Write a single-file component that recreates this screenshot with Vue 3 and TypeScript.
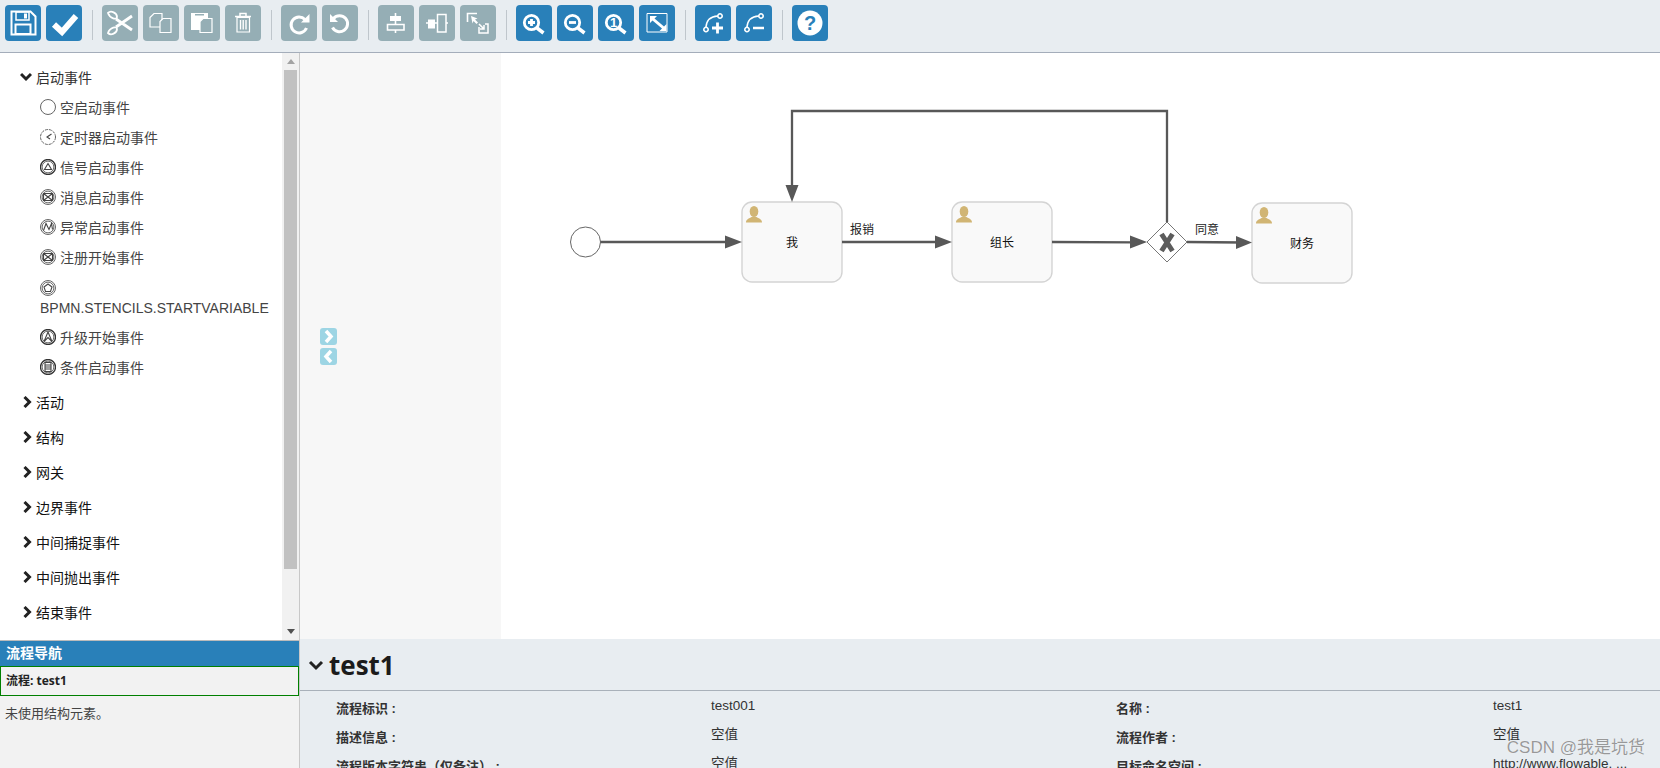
<template>
  <div class="editor">
    <header class="toolbar">
      <template v-for="(group, g) in toolbar" :key="g">
        <i v-if="g > 0" class="tool-sep"></i>
        <button
          v-for="btn in group"
          :key="btn.name"
          class="tool-btn"
          :class="{ disabled: btn.disabled }"
          :title="btn.name"
        >
          <svg viewBox="0 0 36 36" width="36" height="36">
            <path
              v-for="(p, i) in icons[btn.name]"
              :key="i"
              :d="p.d"
              :fill="p.fill ?? 'none'"
              :stroke="p.stroke ?? (p.fill ? 'none' : '#fff')"
              :stroke-width="p.w ?? 1.6"
            />
            <text v-if="btn.glyph" :x="btn.glyphX" :y="btn.glyphY" :font-size="btn.glyphSize" :fill="btn.glyphFill" class="tool-glyph">{{ btn.glyph }}</text>
          </svg>
        </button>
      </template>
    </header>

    <div class="workspace">
      <aside class="left-col">
        <div class="palette">
          <div class="palette-list">
            <div class="group-open">
              <svg class="chev" width="12" height="12" viewBox="0 0 12 12"><path d="M1 3l5 5 5-5" /></svg>
              启动事件
            </div>
            <div v-for="item in startEvents" :key="item.name" class="item" :class="{ tall: item.tall }">
              <svg width="16" height="16" viewBox="0 0 16 16" class="item-icon">
                <circle cx="8" cy="8" r="7.500" fill="#fff" :stroke="item.dark ? '#333' : '#666'" :stroke-width="item.dark ? 1.3 : 1" :stroke-dasharray="item.dashed ? '3 1' : undefined" />
                <circle v-if="item.inner" cx="8" cy="8" r="5.900" fill="none" stroke="#666" stroke-width="1" />
                <path v-if="item.d" :d="item.d" fill="none" stroke="#444" stroke-width="1.100" />
              </svg>
              <span>{{ item.name }}</span>
            </div>
            <div class="closed-groups">
              <div v-for="name in closedGroups" :key="name" class="group">
                <svg class="chev" width="12" height="12" viewBox="0 0 12 12"><path d="M3.500 1l5 5-5 5" /></svg>
                {{ name }}
              </div>
            </div>
          </div>
          <div class="scrollbar">
            <span class="sb-up"></span>
            <span class="sb-thumb"></span>
            <span class="sb-rest"></span>
            <span class="sb-down"></span>
          </div>
        </div>
        <div class="navigator">
          <div class="nav-title">流程导航</div>
          <div class="nav-current">流程: test1</div>
          <p class="nav-empty">未使用结构元素。</p>
        </div>
      </aside>

      <main class="right-col">
        <section class="canvas">
          <div class="canvas-side">
            <span class="side-btn"><svg width="17" height="17" viewBox="0 0 17 17"><path d="M6 3l5 5.500-5 5.500" /></svg></span>
            <span class="side-btn"><svg width="17" height="17" viewBox="0 0 17 17"><path d="M11 3l-5 5.500 5 5.500" /></svg></span>
          </div>
          <svg class="diagram" viewBox="501 53 1159 586" width="1159" height="586">
            <circle cx="585.500" cy="242" r="15" fill="#fff" stroke="#666" stroke-width="1" />

            <g v-for="t in tasks" :key="t.name">
              <rect :x="t.x" :y="t.y" width="100" height="80" rx="10" fill="#f9f9f9" stroke="#d4d4d4" stroke-width="1.400" />
              <ellipse :cx="t.x + 12" :cy="t.y + 9.500" rx="4.300" ry="5.500" fill="#d1b574" />
              <path :d="`M${t.x + 4} ${t.y + 20.500}c0-3 2-3.500 5.500-5.500h5c3.500 2 5.500 2.500 5.500 5.500z`" fill="#d1b574" />
              <text :x="t.x + 50" :y="t.y + 45" class="task-name">{{ t.name }}</text>
            </g>

            <path v-for="(f, i) in flows" :key="i" :d="f" fill="none" stroke="#585858" stroke-width="2.300" />
            <path d="M742 242l-17-6.500v13zM952 242l-17-6.500v13zM1147 242l-17-6.500v13zM1252 242.500l-16-6.500v13zM792 202l-6.500-17h13z" fill="#585858" />

            <path d="M1167 222l20 20-20 20-20-20z" fill="#fff" stroke="#777" stroke-width="1" />
            <path d="M1161.500 234l11 17M1172.500 234l-11 17" stroke="#5c5c5c" stroke-width="5" fill="none" />

            <text x="850" y="234" class="flow-label">报销</text>
            <text x="1195" y="234" class="flow-label">同意</text>
          </svg>
        </section>

        <section class="props">
          <div class="props-head">
            <svg class="chev head-chev" width="16" height="16" viewBox="0 0 16 16"><path d="M2 5l6 6 6-6" /></svg>
            <h1>test1</h1>
          </div>
          <div class="props-grid">
            <template v-for="row in properties" :key="row.label">
              <div class="prop-label">{{ row.label }}</div>
              <div class="prop-value">{{ row.value }}</div>
            </template>
          </div>
        </section>
      </main>
    </div>

    <div class="watermark">CSDN @我是坑货</div>
  </div>
</template>

<script setup lang="ts">
type Shape = { d: string; fill?: string; stroke?: string; w?: number }
type ToolBtn = {
  name: string
  disabled?: boolean
  glyph?: string
  glyphX?: number
  glyphY?: number
  glyphSize?: number
  glyphFill?: string
}

const circle = (x: number, y: number, r: number) =>
  `M${x - r} ${y}a${r} ${r} 0 1 0 ${2 * r} 0a${r} ${r} 0 1 0 ${-2 * r} 0z`

const grey = '#95aeb5'

const lens: Shape[] = [
  { d: circle(15.5, 17.5, 7.2), w: 2.800 },
  { d: 'M21 23l6.500 5', w: 3.500 }
]

const icons: Record<string, Shape[]> = {
  save: [
    { d: 'M6.500 6.500h19l5 5v18h-24z', w: 2 },
    { d: 'M11 7h13v8H11z', w: 1.500 },
    { d: 'M19 8.500h3v5h-3z', fill: '#fff' },
    { d: 'M10.500 19.500h15v9.500h-15z', w: 2 }
  ],
  check: [{ d: 'M8 19.500l8 7.500L30 11', w: 6 }],
  cut: [
    { d: 'M6 8c3-3 9 0 9 4 0 3-7 2-9-4z', w: 1.800 },
    { d: 'M6 28c3 3 9 0 9-4 0-3-7-2-9 4z', w: 1.800 },
    { d: 'M14 14l16 11M14 22l16-11', w: 2.800 }
  ],
  copy: [
    { d: 'M7 12.500l4-4h8v13.500H7z', w: 1.200 },
    { d: 'M17 16.500l3-3h8v14H17z', w: 1.200, fill: grey, stroke: '#fff' }
  ],
  paste: [
    { d: 'M7 8h17v17H7z', fill: '#fff' },
    { d: 'M11 9h9v1.500h-9z', fill: grey },
    { d: 'M16 16.500l3-3h9v14H16z', w: 1.200, fill: grey, stroke: '#fff' }
  ],
  trash: [
    { d: 'M10 11.500h16M15 11V8.500h6V11', w: 1.500 },
    { d: 'M12 12.500h12.500V27H12z', w: 1.200 },
    { d: 'M15.500 15v9.500M18.200 15v9.500M21 15v9.500', w: 1.400 }
  ],
  redo: [
    { d: 'M24 14.500a8 8 0 1 0 1.500 8.500', w: 3 },
    { d: 'M20 17.500h8.500V9z', fill: '#fff' }
  ],
  undo: [
    { d: 'M11.500 13.500a8 8 0 1 1-1 9', w: 3 },
    { d: 'M16 17H8V9z', fill: '#fff' }
  ],
  alignV: [
    { d: 'M17.500 8v3M17.500 16v3M17.500 25v3', w: 1.600 },
    { d: 'M12 11h11v5H12z', fill: '#fff' },
    { d: 'M9.500 19.500H26V25H9.500z', w: 1.600 }
  ],
  alignH: [
    { d: 'M7 18h2M16 18h2.500M27 18h2', w: 1.600 },
    { d: 'M9 14.500h7v9H9z', fill: '#fff' },
    { d: 'M18.500 9.500H27V27h-8.500z', w: 1.500 }
  ],
  sameSize: [
    { d: 'M7.500 17V8.500H17', w: 1.600 },
    { d: 'M11 11l6.500 2.500-2.500 1 3 3-1.500 1.500-3-3-1 2.500z', fill: '#fff' },
    { d: 'M19 22v6h9v-9h-3', w: 1.500 },
    { d: 'M19 19l5 5M24 20v4h-4', w: 1.500 }
  ],
  zoomIn: [...lens, { d: 'M12 17.500h7M15.500 14v7', w: 2.800 }],
  zoomOut: [...lens, { d: 'M12 17.500h7', w: 2.800 }],
  zoomOne: [...lens],
  fit: [
    { d: 'M8 8.500h20V27H8z', w: 1 },
    { d: 'M11 11h7l-2.500 2.500 9.500 8 2.500-2.500v7h-7l2.500-2.500-9.500-8L11 18z', fill: '#fff' }
  ],
  bendAdd: [
    { d: circle(11, 24.500, 2.200), w: 1.600 },
    { d: circle(25, 11, 2.200), w: 1.600 },
    { d: 'M11 22c.5-7 4-10.500 11.800-11', w: 1.600 },
    { d: 'M17 23h11M22.500 17.500v11', w: 2.800 }
  ],
  bendRemove: [
    { d: circle(11, 24.500, 2.200), w: 1.600 },
    { d: circle(25, 11, 2.200), w: 1.600 },
    { d: 'M11 22c.5-7 4-10.500 11.800-11', w: 1.600 },
    { d: 'M17 23h11', w: 2.500 }
  ],
  help: [{ d: circle(18, 18, 12.500), fill: '#fff' }]
}

const toolbar: ToolBtn[][] = [
  [{ name: 'save' }, { name: 'check' }],
  [
    { name: 'cut', disabled: true },
    { name: 'copy', disabled: true },
    { name: 'paste', disabled: true },
    { name: 'trash', disabled: true }
  ],
  [
    { name: 'redo', disabled: true },
    { name: 'undo', disabled: true }
  ],
  [
    { name: 'alignV', disabled: true },
    { name: 'alignH', disabled: true },
    { name: 'sameSize', disabled: true }
  ],
  [
    { name: 'zoomIn' },
    { name: 'zoomOut' },
    { name: 'zoomOne', glyph: '1', glyphX: 12, glyphY: 22, glyphSize: 13, glyphFill: '#fff' },
    { name: 'fit' }
  ],
  [{ name: 'bendAdd' }, { name: 'bendRemove' }],
  [{ name: 'help', glyph: '?', glyphX: 12, glyphY: 25, glyphSize: 20, glyphFill: '#2980b9' }]
]

type PaletteItem = {
  name: string
  d?: string
  inner?: boolean
  dark?: boolean
  dashed?: boolean
  tall?: boolean
}

const startEvents: PaletteItem[] = [
  { name: '空启动事件' },
  { name: '定时器启动事件', dashed: true, d: 'M11.500 5L7 8l3 2' },
  { name: '信号启动事件', inner: true, dark: true, d: 'M8 4.500l3.500 6h-7z' },
  { name: '消息启动事件', inner: true, d: 'M3.500 4.500h9v7h-9zM3.500 4.500L8 8l4.500-3.500M3.500 11.500L8 8l4.500 3.500' },
  { name: '异常启动事件', inner: true, d: 'M3.500 11.500L6 4.500l3 6 2.500-6 1 6' },
  { name: '注册开始事件', inner: true, d: 'M3.500 4.500h9v7h-9zM3.500 4.500L8 8l4.500-3.500M3.500 11.500L8 8l4.500 3.500' },
  { name: 'BPMN.STENCILS.STARTVARIABLE', inner: true, tall: true, d: 'M8 4l4 3-1.500 4.500h-5L4 7z' },
  { name: '升级开始事件', inner: true, dark: true, d: 'M4 12.500L8 3l4 9.500-4-4z' },
  { name: '条件启动事件', inner: true, dark: true, d: 'M5 3.500h6v9H5zM5 6h6M5 8h6M5 10h6' }
]

const closedGroups = ['活动', '结构', '网关', '边界事件', '中间捕捉事件', '中间抛出事件', '结束事件']

const tasks = [
  { name: '我', x: 742, y: 202 },
  { name: '组长', x: 952, y: 202 },
  { name: '财务', x: 1252, y: 203 }
]

const flows = [
  'M600.500 242H730',
  'M842 242H940',
  'M1052 242l84 .300',
  'M1187 242l55 .500',
  'M1167 222V111H792V190'
]

const properties = [
  { label: '流程标识 :', value: 'test001' },
  { label: '名称 :', value: 'test1' },
  { label: '描述信息 :', value: '空值' },
  { label: '流程作者 :', value: '空值' },
  { label: '流程版本字符串（仅备注） :', value: '空值' },
  { label: '目标命名空间 :', value: 'http://www.flowable. ...' }
]
</script>

<style>
html,
body {
  margin: 0;
  overflow: hidden;
}
</style>

<style scoped>
.editor {
  position: relative;
  display: flex;
  flex-direction: column;
  width: 1660px;
  height: 768px;
  overflow: hidden;
  font-family: "Liberation Sans", "Noto Sans CJK SC", sans-serif;
  color: #333;
  background: #fff;
}

.toolbar {
  display: flex;
  align-items: flex-start;
  box-sizing: border-box;
  height: 53px;
  padding: 5px 0 0 5px;
  background: #e8edf1;
  border-bottom: 1px solid #a4adba;
}

.tool-btn {
  width: 36px;
  height: 36px;
  margin-right: 5px;
  padding: 0;
  border: 0;
  border-radius: 4px;
  background: #2980b9;
}

.tool-btn svg {
  display: block;
}

.tool-btn.disabled {
  background: #95aeb5;
}

.tool-glyph {
  font-family: "Liberation Sans", sans-serif;
  font-weight: 700;
}

.tool-sep {
  width: 1px;
  height: 30px;
  margin: 5px 9px 0 5px;
  background: #bfc6cc;
}

.workspace {
  display: flex;
  flex: 1;
  min-height: 0;
}

.left-col {
  display: flex;
  flex-direction: column;
  flex: none;
  box-sizing: border-box;
  width: 300px;
  border-right: 1px solid #c8c8c8;
}

.palette {
  display: flex;
  flex: none;
  height: 587px;
}

.palette-list {
  flex: 1;
  padding-top: 9px;
  font-size: 14px;
}

.group-open,
.group {
  display: flex;
  align-items: center;
}

.group-open {
  gap: 4px;
  height: 30px;
  padding-left: 20px;
}

.closed-groups {
  margin-top: 2px;
}

.group {
  gap: 3px;
  height: 35px;
  padding-left: 21px;
  color: #111;
}

.chev path {
  fill: none;
  stroke: #222;
  stroke-width: 3;
}

.item {
  display: flex;
  align-items: center;
  gap: 4px;
  height: 30px;
  padding-left: 40px;
  color: #444;
}

.item.tall {
  flex-direction: column;
  align-items: flex-start;
  gap: 4px;
  height: 50px;
  padding-top: 8px;
  box-sizing: border-box;
}

.item-icon {
  flex: none;
}

.scrollbar {
  display: flex;
  flex-direction: column;
  align-items: center;
  flex: none;
  width: 17px;
  background: #f1f1f1;
}

.sb-up,
.sb-down {
  flex: none;
  width: 0;
  height: 0;
  border-left: 4px solid transparent;
  border-right: 4px solid transparent;
}

.sb-up {
  margin: 6px 0;
  border-bottom: 5px solid #a3a3a3;
}

.sb-down {
  margin: 6px 0;
  border-top: 5px solid #505050;
}

.sb-thumb {
  flex: none;
  align-self: flex-start;
  width: 13px;
  height: 499px;
  margin-left: 2px;
  background: #c1c1c1;
}

.sb-rest {
  flex: 1;
}

.navigator {
  flex: 1;
  background: #f2f2f2;
  border-top: 1px solid #bbb;
}

.nav-title {
  box-sizing: border-box;
  height: 25px;
  padding-left: 6px;
  font-size: 14px;
  font-weight: 700;
  line-height: 24px;
  color: #fff;
  background: #2980b9;
}

.nav-current {
  box-sizing: border-box;
  height: 30px;
  padding-left: 5px;
  font-family: "Open Sans", "Noto Sans CJK SC", sans-serif;
  font-size: 12px;
  font-weight: 700;
  line-height: 28px;
  color: #222;
  border: 1px solid #008000;
}

.nav-empty {
  margin: 7px 0 0 5px;
  font-size: 13px;
  color: #444;
}

.right-col {
  display: flex;
  flex-direction: column;
  flex: 1;
  min-width: 0;
}

.canvas {
  display: flex;
  flex: none;
  height: 586px;
  background: #fff;
}

.canvas-side {
  display: flex;
  flex-direction: column;
  justify-content: center;
  gap: 3px;
  flex: none;
  box-sizing: border-box;
  width: 201px;
  padding-left: 20px;
  background: #f7f7f7;
}

.side-btn {
  width: 17px;
  height: 17px;
  border-radius: 3px;
  background: #9dd5e4;
}

.side-btn svg {
  display: block;
}

.side-btn path {
  fill: none;
  stroke: #fff;
  stroke-width: 3.500;
}

.diagram {
  display: block;
  flex: none;
}

.task-name {
  font-size: 12px;
  text-anchor: middle;
  fill: #111;
}

.flow-label {
  font-size: 12px;
  fill: #222;
}

.props {
  flex: 1;
  background: #e8edf1;
}

.props-head {
  display: flex;
  align-items: center;
  gap: 5px;
  box-sizing: border-box;
  height: 52px;
  padding-left: 8px;
  border-bottom: 1px solid #a9b1ba;
}

.head-chev path {
  stroke-width: 3;
}

.props-head h1 {
  margin: 0;
  font-family: "Open Sans", sans-serif;
  font-size: 26px;
  font-weight: 700;
  color: #1b1b1b;
}

.props-grid {
  display: grid;
  grid-template-columns: 375px 405px 377px 1fr;
  grid-auto-rows: 29px;
  padding: 2px 0 0 36px;
}

.prop-label {
  padding-top: 5px;
  font-size: 13px;
  font-weight: 700;
  color: #333;
}

.prop-value {
  padding-top: 4px;
  font-size: 13.500px;
  line-height: 18px;
  color: #333;
}

.watermark {
  position: absolute;
  right: 15px;
  bottom: 10px;
  font-size: 17px;
  color: rgba(120, 120, 120, 0.75);
  text-shadow: 0 0 1px rgba(255, 255, 255, 0.9);
}
</style>
